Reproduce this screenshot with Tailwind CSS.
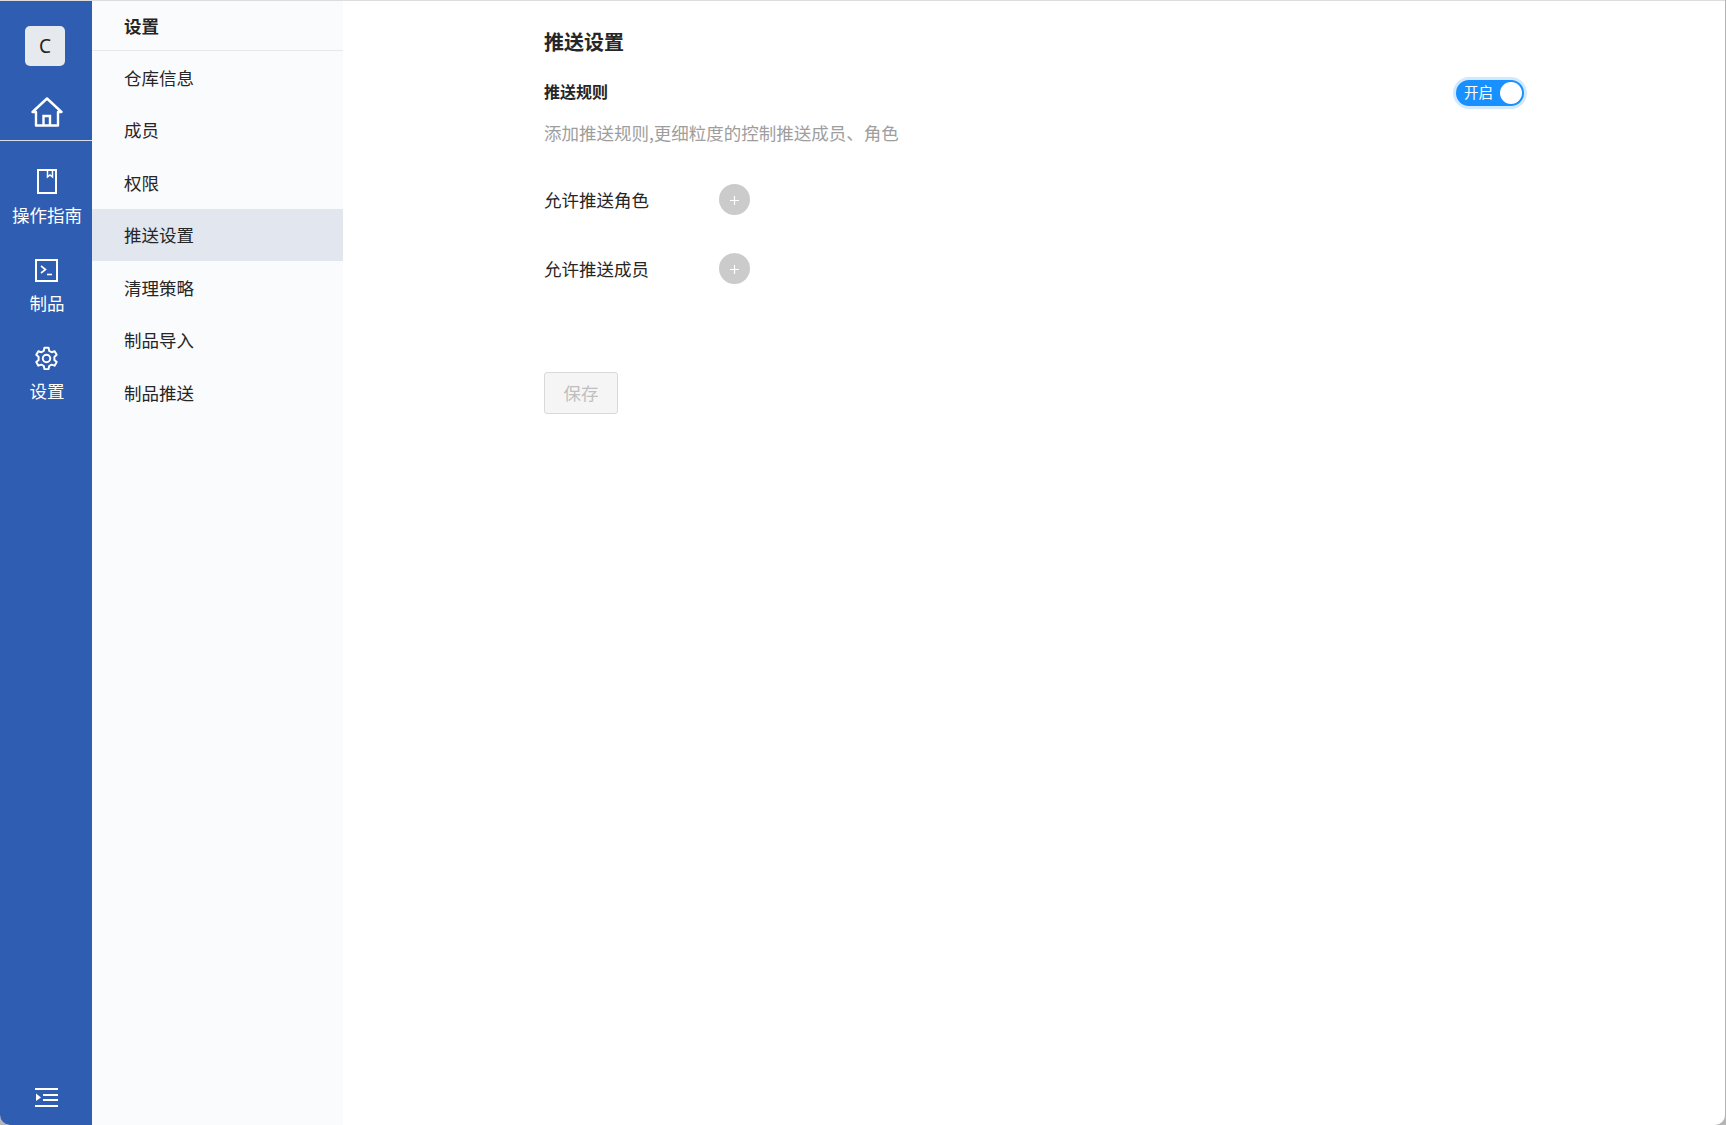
<!DOCTYPE html>
<html lang="zh-CN">
<head>
  <meta charset="UTF-8" />
  <title>推送设置</title>
  <script src="https://cdn.jsdelivr.net/npm/@tailwindcss/browser@4"></script>
</head>
<body class="bg-[#b5b5b5] font-['Noto_Sans_CJK_SC','Noto_Sans',sans-serif]">
  <div class="h-[1125px] w-[1725px] flex flex-col bg-white rounded-b-[10px] overflow-hidden border-t border-[#dcdcdc]">
    <div class="flex flex-1 min-h-0">
      <!-- main nav -->
      <div class="w-[92px] bg-[#2f5db1] flex flex-col text-white text-[17.5px] leading-[24px]">
        <div class="h-[140px] border-b border-[#d8dee9] pl-[2px] flex flex-col items-center shrink-0">
          <div class="mt-[25px] ml-[-4px] w-10 h-10 rounded-[5px] bg-[#e6e9ed] text-[#222] flex items-center justify-center text-[19px] font-['Noto_Sans',sans-serif]">C</div>
          <svg class="mt-[31px]" width="32" height="30" viewBox="0 0 32 30" fill="none" stroke="white" stroke-width="2.4"><path d="M1.5 15 16 1.5 30.5 15H27V28.5H5V15Z" stroke-linejoin="round"/><path d="M12.5 28.5V19H19V28.5"/></svg>
        </div>
        <div class="flex flex-col items-center pl-[2px] pt-[28px]">
          <svg class="ml-[-1px]" width="20" height="25" viewBox="0 0 20 25" fill="none" stroke="white" stroke-width="2"><path d="M1 1H19V24H1Z"/><path d="M10.5 1V8L13 6L15.5 8V1" stroke-width="1.5"/></svg>
          <span class="mt-[9px]">操作指南</span>
        </div>
        <div class="flex flex-col items-center pl-[2px] pt-[32px]">
          <svg class="ml-[-1px]" width="23" height="23" viewBox="0 0 23 23" fill="none" stroke="white" stroke-width="1.6"><path d="M1 1H22V22H1Z" stroke-width="2"/><path d="M6 7L10.5 10.5L6 14"/><path d="M12 15.5H17"/></svg>
          <span class="mt-[9px]">制品</span>
        </div>
        <div class="flex flex-col items-center pl-[2px] pt-[31px]">
          <svg class="ml-[-1px]" width="25" height="25" viewBox="0 0 24 24" fill="none" stroke="white" stroke-width="1.9" stroke-linejoin="round"><path d="M10 1.7h4l.6 3 2.3 1.3 2.9-1 2 3.5-2.3 2a8 8 0 0 1 0 2.9l2.3 2-2 3.5-2.9-1-2.3 1.3-.6 3h-4l-.6-3-2.3-1.3-2.9 1-2-3.5 2.3-2a8 8 0 0 1 0-2.9l-2.3-2 2-3.5 2.9 1L9.4 4.7Z"/><circle cx="12" cy="12" r="3.6"/></svg>
          <span class="mt-[8px]">设置</span>
        </div>
        <div class="mt-auto flex justify-center pl-[1px] pb-[18px]">
          <svg width="23" height="20" viewBox="0 0 23 20" fill="white"><rect y="1" width="23" height="2"/><rect x="8" y="7" width="15" height="2"/><rect x="8" y="12" width="15" height="2"/><rect y="18" width="23" height="2"/><path d="M1 6.5 6 10.5 1 14Z"/></svg>
        </div>
      </div>

      <!-- sub nav -->
      <div class="w-[251px] bg-[#fafbfd] text-[17.5px] text-[#262626]">
        <div class="h-[50px] border-b border-[#e8e8e8] pl-[32px] flex items-center font-bold pt-[1px]">设置</div>
        <div class="flex flex-col pt-[0.4px]">
          <div class="h-[52.5px] pl-[32px] flex items-center">仓库信息</div>
          <div class="h-[52.5px] pl-[32px] flex items-center">成员</div>
          <div class="h-[52.5px] pl-[32px] flex items-center">权限</div>
          <div class="h-[52.5px] pl-[32px] flex items-center bg-[#e2e6ef]">推送设置</div>
          <div class="h-[52.5px] pl-[32px] flex items-center">清理策略</div>
          <div class="h-[52.5px] pl-[32px] flex items-center">制品导入</div>
          <div class="h-[52.5px] pl-[32px] flex items-center">制品推送</div>
        </div>
      </div>

      <!-- content -->
      <div class="flex-1 pl-[201px] pr-[201px] pt-[27px] text-[#262626]">
        <div class="text-[20px] leading-[28px] font-bold">推送设置</div>
        <div class="flex items-center justify-between mt-[20px] h-[32px]">
          <span class="text-[16px] font-bold mb-[2px]">推送规则</span>
          <div class="w-[68px] h-[26px] mt-[1px] rounded-full bg-[#1890ff] ring-[3px] ring-[#1890ff]/20 flex items-center justify-between pl-[8px] pr-[2px] text-white text-[14.5px]">
            <span class="mb-[2px]">开启</span>
            <span class="w-[22px] h-[22px] rounded-full bg-white"></span>
          </div>
        </div>
        <div class="mt-[12px] text-[17.5px] leading-[26px] text-[#9e9e9e]">添加推送规则,更细粒度的控制推送成员、角色</div>
        <div class="flex items-center mt-[38px] h-[32px]">
          <span class="w-[175px] text-[17.5px]">允许推送角色</span>
          <span class="w-[31px] h-[31px] mb-[1px] rounded-full bg-[#cbcbcb] flex items-center justify-center">
            <svg class="mt-[2px]" width="11" height="11" viewBox="0 0 11 11" stroke="white" stroke-width="1.2"><path d="M5.5 1V10M1 5.5H10"/></svg>
          </span>
        </div>
        <div class="flex items-center mt-[37px] h-[32px]">
          <span class="w-[175px] text-[17.5px]">允许推送成员</span>
          <span class="w-[31px] h-[31px] mb-[1px] rounded-full bg-[#cbcbcb] flex items-center justify-center">
            <svg class="mt-[2px]" width="11" height="11" viewBox="0 0 11 11" stroke="white" stroke-width="1.2"><path d="M5.5 1V10M1 5.5H10"/></svg>
          </span>
        </div>
        <button class="mt-[87px] w-[74px] h-[42px] rounded-[3px] border border-[#d9d9d9] bg-[#f5f5f5] text-[#bfbfbf] text-[17.5px]">保存</button>
      </div>
    </div>
  </div>
</body>
</html>
